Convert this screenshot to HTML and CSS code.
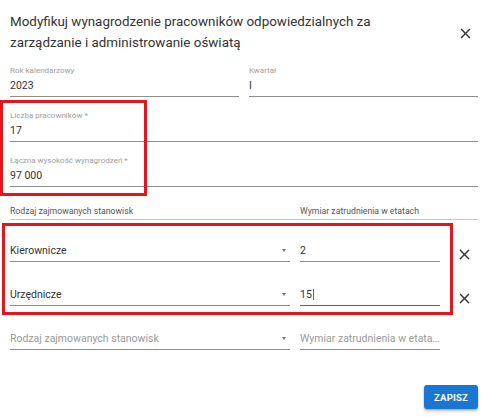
FILE: index.html
```html
<!DOCTYPE html>
<html lang="pl">
<head>
<meta charset="utf-8">
<title>Modyfikuj wynagrodzenie</title>
<link rel="stylesheet" href="styles.css">
</head>
<body>
<div class="dialog">
  <div class="dialog-header">
    <h2 class="dialog-title">Modyfikuj wynagrodzenie pracowników odpowiedzialnych za zarządzanie i administrowanie oświatą</h2>
    <button class="icon-btn close-btn" aria-label="Zamknij">
      <svg width="17" height="17" viewBox="0 0 24 24"><path fill="currentColor" d="M19 6.41L17.59 5 12 10.59 6.41 5 5 6.41 10.59 12 5 17.59 6.41 19 12 13.41 17.59 19 19 17.59 13.41 12z"/></svg>
    </button>
  </div>

  <div class="dialog-body">
    <div class="grid-2">
      <div class="field">
        <span class="field-label">Rok kalendarzowy</span>
        <div class="field-value">2023</div>
      </div>
      <div class="field">
        <span class="field-label">Kwartał</span>
        <div class="field-value">I</div>
      </div>
    </div>

    <div class="field form-row">
      <span class="field-label">Liczba pracowników *</span>
      <div class="field-value">17</div>
    </div>

    <div class="field form-row">
      <span class="field-label">Łączna wysokość wynagrodzeń *</span>
      <div class="field-value">97 000</div>
    </div>

    <div class="table-head">
      <span>Rodzaj zajmowanych stanowisk</span>
      <span>Wymiar zatrudnienia w etatach</span>
    </div>

    <div class="pos-list">
      <div class="pos-row">
        <div class="line-field select-field"><span class="line-text">Kierownicze</span><span class="select-arrow"></span></div>
        <div class="line-field"><span class="line-text">2</span></div>
        <button class="icon-btn row-remove" aria-label="Usuń">
          <svg width="17" height="17" viewBox="0 0 24 24"><path fill="currentColor" d="M19 6.41L17.59 5 12 10.59 6.41 5 5 6.41 10.59 12 5 17.59 6.41 19 12 13.41 17.59 19 19 17.59 13.41 12z"/></svg>
        </button>
      </div>
      <div class="pos-row">
        <div class="line-field select-field"><span class="line-text">Urzędnicze</span><span class="select-arrow"></span></div>
        <div class="line-field focused"><span class="line-text">15<span class="caret"></span></span></div>
        <button class="icon-btn row-remove" aria-label="Usuń">
          <svg width="17" height="17" viewBox="0 0 24 24"><path fill="currentColor" d="M19 6.41L17.59 5 12 10.59 6.41 5 5 6.41 10.59 12 5 17.59 6.41 19 12 13.41 17.59 19 19 17.59 13.41 12z"/></svg>
        </button>
      </div>
      <div class="pos-row">
        <div class="line-field select-field"><span class="line-text placeholder">Rodzaj zajmowanych stanowisk</span><span class="select-arrow"></span></div>
        <div class="line-field"><span class="line-text placeholder">Wymiar zatrudnienia w etatach</span></div>
      </div>
    </div>

    <div class="actions">
      <button class="btn-primary">ZAPISZ</button>
    </div>
  </div>

  <div class="highlight hl-top"></div>
  <div class="highlight hl-rows"></div>
</div>
</body>
</html>
```

FILE: styles.css
```css
* { box-sizing: border-box; }

html, body {
  margin: 0;
  padding: 0;
  background: #ffffff;
}

body {
  font-family: Roboto, "Liberation Sans", Arial, sans-serif;
  color: #333333;
  width: 503px;
  height: 417px;
  overflow: hidden;
}

.dialog {
  position: relative;
  padding: 11px 25px 0 10px;
}

.dialog-header {
  display: flex;
  align-items: center;
}

.dialog-title {
  margin: 0;
  flex: 1;
  max-width: 400px;
  font-size: 13.4px;
  font-weight: 400;
  line-height: 21px;
  color: #333333;
}

.icon-btn {
  border: 0;
  background: none;
  padding: 0;
  width: 24px;
  height: 24px;
  display: flex;
  align-items: center;
  justify-content: center;
  color: #333333;
  cursor: pointer;
}

.close-btn {
  margin-left: auto;
  margin-right: 1px;
  margin-top: 2px;
}

.dialog-body {
  margin-top: 12px;
}

.grid-2 {
  display: grid;
  grid-template-columns: 1fr 1fr;
  column-gap: 10px;
}

.field {
  display: block;
  border-bottom: 1px solid #8e8e8e;
  padding-bottom: 2px;
}

.form-row {
  margin-top: 13px;
}

.field-label {
  display: block;
  font-size: 8px;
  line-height: 12px;
  color: #a0a0a0;
  white-space: nowrap;
}

.field-value {
  font-size: 10.5px;
  line-height: 17px;
  color: #333333;
}

.table-head {
  display: grid;
  grid-template-columns: 280px 1fr;
  column-gap: 10px;
  margin-top: 17px;
  padding-bottom: 1px;
  border-bottom: 1px solid #c6c6c6;
  font-size: 8.7px;
  line-height: 14px;
  color: #555555;
}

.pos-list {
  margin-top: 22px;
  display: flex;
  flex-direction: column;
  gap: 20px;
}

.pos-row {
  display: grid;
  grid-template-columns: 280px 140px 1fr;
  column-gap: 10px;
  align-items: start;
  min-height: 24px;
}

.line-field {
  display: flex;
  align-items: center;
  min-width: 0;
  border-bottom: 1px solid #8e8e8e;
  padding-bottom: 2px;
  font-size: 10.5px;
  line-height: 17px;
  color: #333333;
}

.line-field.focused {
  border-bottom-color: #1976d2;
}

.line-text {
  flex: 1;
  min-width: 0;
  white-space: nowrap;
  overflow: hidden;
  text-overflow: ellipsis;
}

.placeholder {
  color: #9a9a9a;
}

.caret {
  display: inline-block;
  width: 1px;
  height: 11px;
  margin-left: 1px;
  background: #1976d2;
  vertical-align: -2px;
}

.select-arrow {
  width: 0;
  height: 0;
  margin-right: 4px;
  border-left: 2.5px solid transparent;
  border-right: 2.5px solid transparent;
  border-top: 3px solid #777777;
}

.row-remove {
  justify-self: end;
  margin-right: 2px;
}

.actions {
  display: flex;
  justify-content: flex-end;
  margin-top: 31px;
}

.btn-primary {
  width: 54px;
  height: 24px;
  border: 0;
  border-radius: 3px;
  background: #1976d2;
  color: #ffffff;
  font-family: Roboto, "Liberation Sans", Arial, sans-serif;
  font-size: 9.5px;
  font-weight: 700;
  letter-spacing: 0.2px;
  box-shadow: 0 2px 3px rgba(0, 0, 0, 0.25), 0 1px 1px rgba(0, 0, 0, 0.12);
  cursor: pointer;
}

.highlight {
  position: absolute;
  border: 3px solid #e5151d;
  pointer-events: none;
}

.hl-top {
  left: 0;
  top: 100px;
  width: 147px;
  height: 96px;
}

.hl-rows {
  left: 2px;
  top: 223px;
  width: 451px;
  height: 92px;
}
```
